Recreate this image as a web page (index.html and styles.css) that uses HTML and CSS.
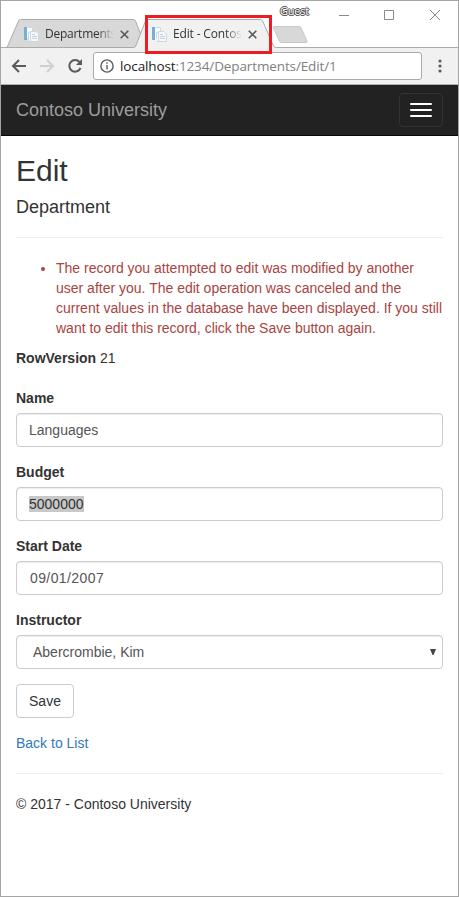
FILE: index.html
```html
<!DOCTYPE html>
<html lang="en">
<head>
<meta charset="utf-8">
<title>Edit - Contoso University</title>
<link rel="stylesheet" href="styles.css">
</head>
<body>
<div class="window">
  <header class="tabstrip">
    <svg class="tab-shapes" width="457" height="47" viewBox="1 1 457 47">
      <path d="M7 47.500L18.500 21Q19.200 19.500 20.500 19.500H133Q134.800 19.500 135.500 21L146 47.500Z" fill="#d8d8d8" stroke="#aaa"/>
      <path d="M1 47.500H133.500Q135 47.500 135.700 46L145.500 21Q146.200 19.500 147.500 19.500H260.500Q262 19.500 262.700 21L273.500 46Q274.200 47.500 275.500 47.500H458V49H1Z" fill="#f1f1f1"/>
      <path d="M1 47.500H133.500Q135 47.500 135.700 46L145.500 21Q146.200 19.500 147.500 19.500H260.500Q262 19.500 262.700 21L273.500 46Q274.200 47.500 275.500 47.500H458" fill="none" stroke="#aaa"/>
      <path d="M274 26.500H299Q300.300 26.500 300.800 27.500L307 41Q307.300 42.500 306 42.500H281.500Q280 42.500 279.500 41.500L273.500 28Q273 26.500 274 26.500Z" fill="#d8d8d8" stroke="#c8c8c8"/>
    </svg>
    <div class="tab tab-first">
      <svg class="favicon" width="16" height="16" viewBox="0 0 16 16"><path d="M1 1H4V14H1Z" fill="#79afd3"/><path d="M4 1H10V5H13L15.500 7V15H6V12H4Z" fill="#f5f9fc"/><path d="M4.500 1.500H9.500V5M5.500 12V6.500H8M7.500 15V5.500H13L15.500 8V15.500H6" fill="none" stroke="#cbd8e2"/><path d="M9 10.500H14M9 12.500H14M9 8.500H12" stroke="#c3d0db"/></svg>
      <span class="tab-title">Departments</span>
      <svg class="tab-close" width="9" height="9" viewBox="0 0 9 9"><path d="M.7.7L8.300 8.300M8.300.7L.7 8.300"/></svg>
    </div>
    <div class="tab tab-active">
      <svg class="favicon" width="16" height="16" viewBox="0 0 16 16"><path d="M1 1H4V14H1Z" fill="#79afd3"/><path d="M4 1H10V5H13L15.500 7V15H6V12H4Z" fill="#f5f9fc"/><path d="M4.500 1.500H9.500V5M5.500 12V6.500H8M7.500 15V5.500H13L15.500 8V15.500H6" fill="none" stroke="#cbd8e2"/><path d="M9 10.500H14M9 12.500H14M9 8.500H12" stroke="#c3d0db"/></svg>
      <span class="tab-title">Edit - Contos</span>
      <svg class="tab-close" width="9" height="9" viewBox="0 0 9 9"><path d="M.7.7L8.300 8.300M8.300.7L.7 8.300"/></svg>
    </div>
    <span class="guest">Guest</span>
    <svg class="window-controls" width="102" height="12" viewBox="0 0 102 12"><path d="M0 6.500H10M45.500 1.500H54.500V10.500H45.500ZM91 1L101 11M101 1L91 11"/></svg>
    <div class="highlight"></div>
  </header>
  <div class="toolbar">
    <svg class="nav-icons" width="76" height="20" viewBox="0 0 76 20">
      <path d="M15 10H2M8 4L2 10L8 16" stroke="#5a5a5a"/>
      <path d="M29 10H42M36 4L42 10L36 16" stroke="#d0d0d0"/>
      <path d="M68.500 6A5.800 5.800 0 1 0 69.500 12" stroke="#5a5a5a"/>
      <path d="M71 3V9H65Z" fill="#5a5a5a" stroke="none"/>
    </svg>
    <div class="address">
      <svg class="info" width="14" height="14" viewBox="0 0 14 14"><circle cx="7" cy="7" r="6.100"/><path d="M7 6V10.500M7 3.200V4.800"/></svg>
      <span class="url"><b>localhost</b>:1234/Departments/Edit/1</span>
    </div>
    <svg class="menu-dots" width="4" height="14" viewBox="0 0 4 14"><circle cx="2" cy="2" r="1.600"/><circle cx="2" cy="7" r="1.600"/><circle cx="2" cy="12" r="1.600"/></svg>
  </div>
  <nav class="navbar">
    <span class="brand">Contoso University</span>
    <button class="toggle" type="button"><i></i><i></i><i></i></button>
  </nav>
  <main class="content">
    <h2>Edit</h2>
    <h4>Department</h4>
    <hr>
    <ul class="errors">
      <li>The record you attempted to edit was modified by another user after you. The edit operation was canceled and the current values in the database have been displayed. If you still want to edit this record, click the Save button again.</li>
    </ul>
    <div class="version"><strong>RowVersion</strong> 21</div>
    <div class="group"><div class="label">Name</div><div class="control">Languages</div></div>
    <div class="group"><div class="label">Budget</div><div class="control"><span class="selected">5000000</span></div></div>
    <div class="group"><div class="label">Start Date</div><div class="control date">09/01/2007</div></div>
    <div class="group"><div class="label">Instructor</div><div class="control select">Abercrombie, Kim<svg width="6" height="6" viewBox="0 0 6 6"><path d="M0 0H6L3.500 6H2.500Z"/></svg></div></div>
    <button class="save" type="button">Save</button>
    <div class="back">Back to List</div>
    <hr>
    <footer>© 2017 - Contoso University</footer>
  </main>
</div>
</body>
</html>
```
FILE: styles.css
```css
* { box-sizing: border-box; }
body {
  margin: 0;
  font: 14px/20px "Liberation Sans", Arial, sans-serif;
  color: #333;
}
.window {
  height: 897px;
  border: 1px solid #a5a5a5;
  background: #fff;
  overflow: hidden;
}
svg { display: block; flex: none; }
.tabstrip {
  position: relative;
  display: flex;
  height: 47px;
  font: 12px/16px "Open Sans", "Noto Sans", sans-serif;
}
.tab-shapes { position: absolute; left: 0; top: 0; }
.tab {
  position: relative;
  display: flex;
  align-items: center;
  height: 28px;
  margin-top: 19px;
}
.tab-first { width: 107px; margin-left: 22px; }
.tab-active { width: 107px; margin-left: 21px; }
.tab-title {
  width: 69px;
  margin-left: 6px;
  white-space: nowrap;
  letter-spacing: -.15px;
  color: #333;
  -webkit-mask-image: linear-gradient(90deg, #000 76%, transparent);
  mask-image: linear-gradient(90deg, #000 76%, transparent);
}
.tab-first .tab-title { letter-spacing: -.25px; }
.tab-close { margin-left: 6px; fill: none; stroke: #5a5a5a; stroke-width: 1.6; }
.guest {
  margin: 2px 0 0 22px;
  font-size: 11px;
  letter-spacing: -.2px;
  color: #fff;
  text-shadow: 1px 0 #444, -1px 0 #444, 0 1px #444, 0 -1px #444;
}
.window-controls { margin: 8px 17px 0 auto; fill: none; stroke: #8a8a8a; }
.highlight {
  position: absolute;
  left: 144px;
  top: 14px;
  width: 127px;
  height: 39px;
  border: 3px solid #ed1c24;
}
.toolbar {
  display: flex;
  align-items: center;
  height: 37px;
  padding: 0 16px 0 10px;
  border-bottom: 1px solid #b0b0b0;
  background: #f1f1f1;
}
.nav-icons { fill: none; stroke-width: 2; }
.address {
  display: flex;
  align-items: center;
  width: 329px;
  height: 28px;
  margin-left: 6px;
  padding-left: 6px;
  border: 1px solid #aaa;
  border-radius: 3px;
  background: #fff;
}
.info { fill: none; stroke: #5a5a5a; stroke-width: 1.4; }
.url {
  margin-left: 6px;
  font: 13.5px/20px "Open Sans", "Noto Sans", sans-serif;
  letter-spacing: -.12px;
  color: #808080;
  white-space: nowrap;
}
.url b { font-weight: 400; color: #222; }
.menu-dots { margin-left: auto; fill: #5a5a5a; }
.navbar {
  display: flex;
  align-items: center;
  justify-content: space-between;
  height: 51px;
  padding: 0 15px;
  border-bottom: 1px solid #080808;
  background: #222;
}
.brand { font-size: 18px; color: #9d9d9d; }
.toggle {
  display: grid;
  gap: 4px;
  width: 44px;
  height: 34px;
  padding: 9px 10px;
  border: 1px solid #333;
  border-radius: 4px;
  background: transparent;
}
.toggle i { width: 22px; height: 2px; border-radius: 1px; background: #fff; }
.content { padding: 18px 15px 0; }
h2, h4 { margin: 0; font-weight: 400; }
h2 { font-size: 30px; line-height: 33px; }
h4 { margin-top: 10px; font-size: 18px; line-height: 20px; }
hr { margin: 20px 0; border: 0; border-top: 1px solid #eee; }
.errors { margin: 0 0 10px; padding-left: 40px; color: #a94442; }
.version { margin-bottom: 20px; }
.group { margin-bottom: 15px; }
.label { margin-bottom: 5px; font-weight: 700; }
.control {
  height: 34px;
  padding: 6px 12px;
  border: 1px solid #ccc;
  border-radius: 4px;
  color: #555;
  box-shadow: inset 0 1px 1px rgba(0, 0, 0, .075);
}
.selected { background: #c8c8c8; color: #333; }
.date { padding-left: 13px; letter-spacing: .4px; }
.select {
  display: flex;
  align-items: center;
  justify-content: space-between;
  padding: 0 6px 0 16px;
}
.select svg { fill: #444; }
.save {
  display: block;
  width: 58px;
  height: 34px;
  margin-bottom: 15px;
  padding: 0;
  border: 1px solid #ccc;
  border-radius: 4px;
  background: #fff;
  color: #333;
  font: inherit;
}
.back { color: #337ab7; }
```
